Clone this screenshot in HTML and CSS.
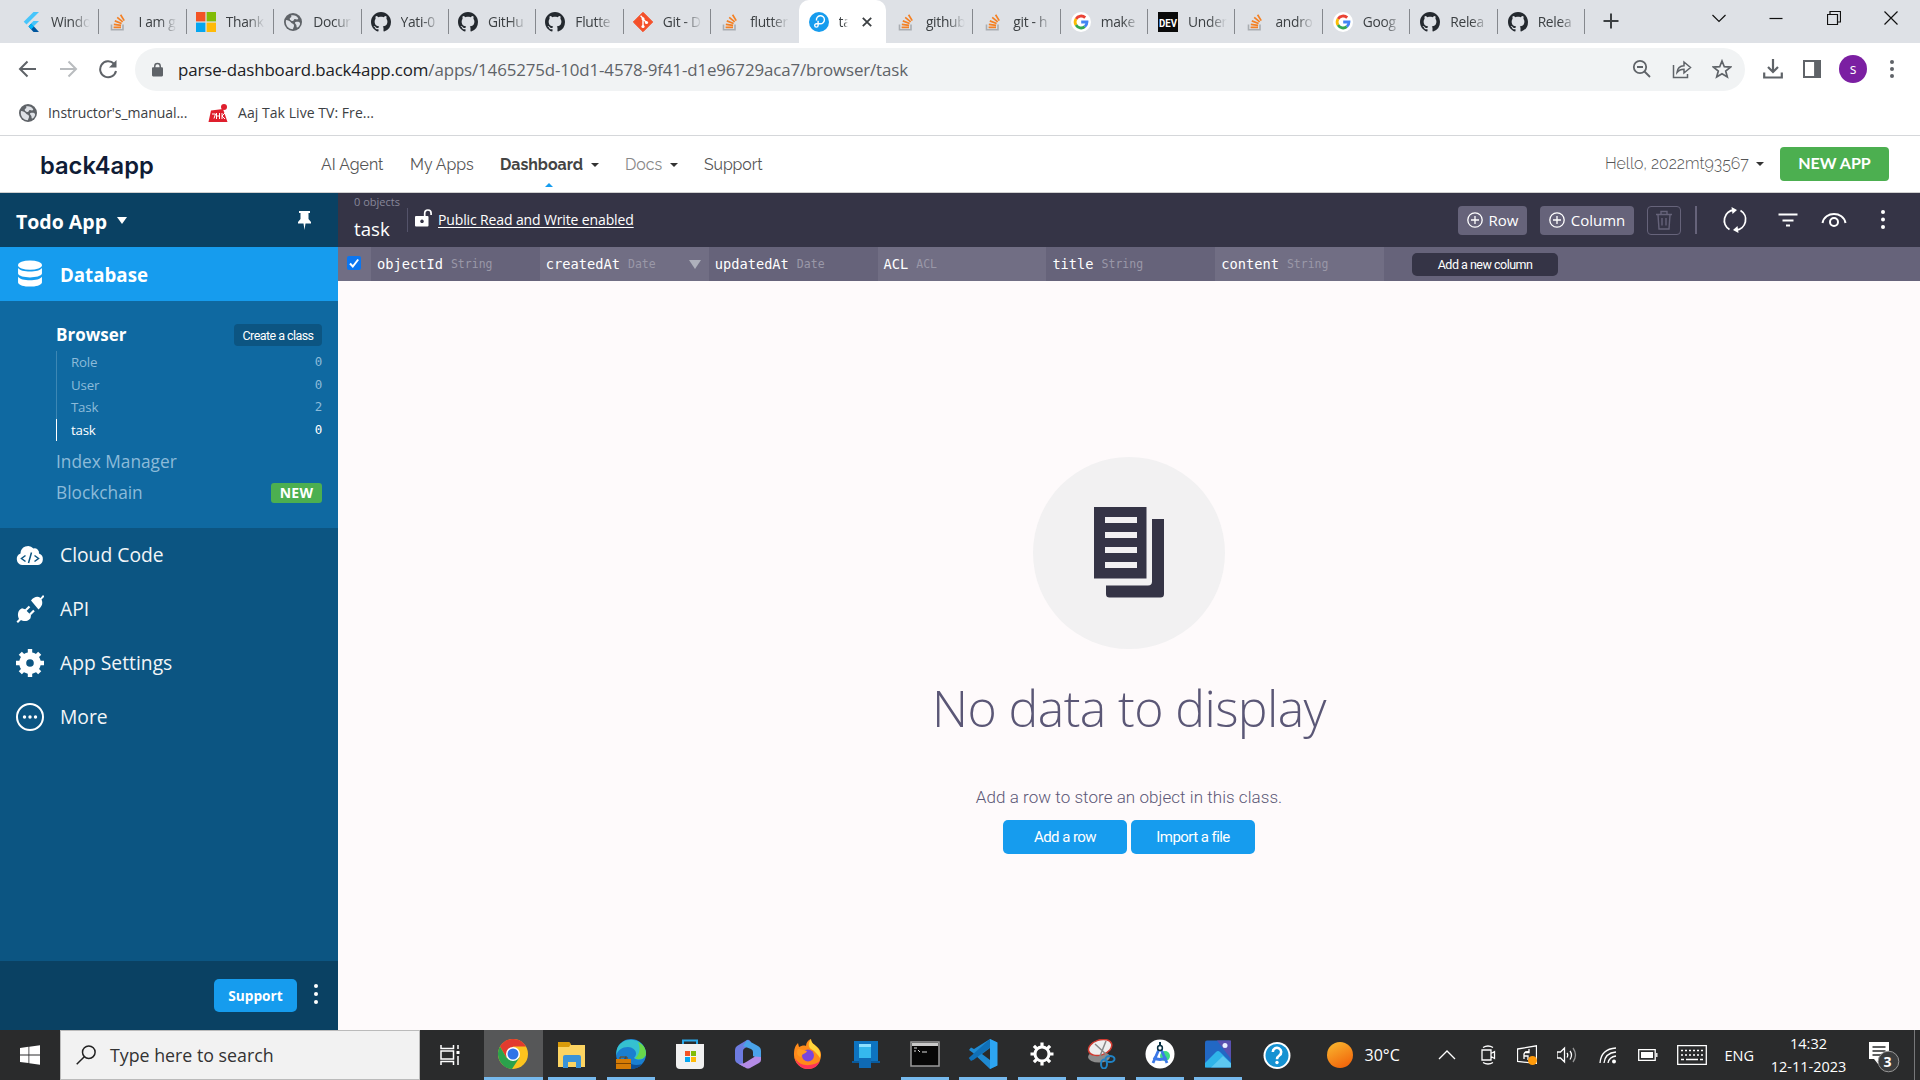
FILE: index.html
```html
<!DOCTYPE html>
<html lang="en">
<head>
<meta charset="utf-8">
<title>task</title>
<link rel="stylesheet" href="styles.css">
</head>
<body>
<svg class="defs" width="0" height="0" aria-hidden="true">
  <symbol id="so" viewBox="0 0 20 20"><path d="M3.5 12.5v5.3h11.5v-5.3" fill="none" stroke="#a9adb2" stroke-width="1.6"/><path d="M5.6 15.3h7.4M5.8 12.3l7.3 1M6.8 8.9l6.8 2.6M9.2 5.4l5.5 4.5M12.6 2.8l3.6 5.8" stroke="#f48024" stroke-width="1.7" fill="none"/></symbol>
  <symbol id="gh" viewBox="0 0 16 16"><path fill="#24292f" d="M8 0C3.58 0 0 3.58 0 8c0 3.54 2.29 6.53 5.47 7.59.4.07.55-.17.55-.38 0-.19-.01-.82-.01-1.49-2.01.37-2.53-.49-2.69-.94-.09-.23-.48-.94-.82-1.13-.28-.15-.68-.52-.01-.53.63-.01 1.08.58 1.23.82.72 1.21 1.87.87 2.33.66.07-.52.28-.87.51-1.07-1.78-.2-3.64-.89-3.64-3.95 0-.87.31-1.59.82-2.15-.08-.2-.36-1.02.08-2.12 0 0 .67-.21 2.2.82.64-.18 1.32-.27 2-.27s1.36.09 2 .27c1.53-1.04 2.2-.82 2.2-.82.44 1.1.16 1.92.08 2.12.51.56.82 1.27.82 2.15 0 3.07-1.87 3.75-3.65 3.95.29.25.54.73.54 1.48 0 1.07-.01 1.93-.01 2.2 0 .21.15.46.55.38A8.01 8.01 0 0 0 16 8c0-4.42-3.58-8-8-8z"/></symbol>
  <symbol id="goog" viewBox="0 0 20 20"><circle cx="10" cy="10" r="10" fill="#fff"/><g fill="none" stroke-width="2.8"><path d="M5 6.9A6 6 0 0 1 14.2 5.6" stroke="#ea4335"/><path d="M5 13.1a6 6 0 0 1 0-6.2" stroke="#fbbc05"/><path d="M13.8 14.7A6 6 0 0 1 5 13.1" stroke="#34a853"/><path d="M10.2 10H16a6 6 0 0 1-2.2 4.7" stroke="#4285f4"/></g></symbol>
  <symbol id="globe" viewBox="0 0 20 20"><circle cx="10" cy="10" r="9" fill="#5f6368"/><path d="M3 8c2 0 4 1 5 2.500s3 1 3 3-1 2-1 3.800C5 17 2 13 3 8zM8 3.500c3-1 6 .5 7 2.500s-2 1.500-3 1-1 2-2.500 2S6 7 7 6s2-1 1-2.500zM12.500 10c2-.5 4-.3 4.500 1s-1 4-2.500 4.500-.5-2-1.500-3-1.500-2.200-.5-2.500z" fill="#dee1e6"/></symbol>
</svg>

<header class="chrome">
  <div class="tabstrip">
    <div class="tab"><svg viewBox="0 0 20 20"><path d="M12.500 0H18L5.500 12.500 2.700 9.800z" fill="#47c5fb"/><path d="M12.500 9H18l-5 5-2.800-2.700z" fill="#47c5fb"/><path d="M7.500 14.400l2.800-2.800 7.700 8.400h-5.500z" fill="#00569e"/><path d="M7.500 14.400l2.800-2.800 2.800 2.800-2.800 2.800z" fill="#00b5f8"/></svg><span>Windo</span></div>
    <div class="tab"><svg><use href="#so"/></svg><span>I am g</span></div>
    <div class="tab"><svg viewBox="0 0 20 20"><path fill="#f35325" d="M0 0h9.400v9.400H0z"/><path fill="#81bc06" d="M10.600 0H20v9.400h-9.400z"/><path fill="#05a6f0" d="M0 10.600h9.400V20H0z"/><path fill="#ffba08" d="M10.600 10.600H20V20h-9.400z"/></svg><span>Thank</span></div>
    <div class="tab"><svg><use href="#globe"/></svg><span>Docur</span></div>
    <div class="tab"><svg><use href="#gh"/></svg><span>Yati-0</span></div>
    <div class="tab"><svg><use href="#gh"/></svg><span>GitHu</span></div>
    <div class="tab"><svg><use href="#gh"/></svg><span>Flutte</span></div>
    <div class="tab"><svg viewBox="0 0 20 20"><path d="M10 .3 19.700 10 10 19.700.3 10z" fill="#f4502a" stroke="#f4502a" stroke-linejoin="round"/><path d="M7.600 3.800 10 6.200v8M10 7l3.500 3.500" stroke="#fff" stroke-width="1.400" fill="none"/><circle cx="10" cy="14.500" r="1.600" fill="#fff"/><circle cx="13.500" cy="10.500" r="1.600" fill="#fff"/><circle cx="10" cy="6.800" r="1.500" fill="#fff"/></svg><span>Git - D</span></div>
    <div class="tab"><svg><use href="#so"/></svg><span>flutter</span></div>
    <div class="tab active"><svg viewBox="0 0 20 20"><circle cx="10" cy="10" r="10" fill="#169cee"/><path d="M7.500 8.500A4 4 0 1 1 11 11.700H7.400a1.700 1.700 0 1 0 1.700 1.700V8.800" stroke="#fff" stroke-width="1.400" fill="none"/></svg><span>ta</span><svg class="x" viewBox="0 0 10 10"><path d="M.8.800l8.400 8.400M9.200.800.800 9.200" stroke="#3c4043" stroke-width="1.800"/></svg></div>
    <div class="tab"><svg><use href="#so"/></svg><span>github</span></div>
    <div class="tab"><svg><use href="#so"/></svg><span>git - h</span></div>
    <div class="tab"><svg><use href="#goog"/></svg><span>make</span></div>
    <div class="tab"><svg viewBox="0 0 20 20"><path d="M0 0h20v20H0z" fill="#0a0a0a"/><text x="1" y="14.500" textLength="18" lengthAdjust="spacingAndGlyphs" class="dev">DEV</text></svg><span>Under</span></div>
    <div class="tab"><svg><use href="#so"/></svg><span>andro</span></div>
    <div class="tab"><svg><use href="#goog"/></svg><span>Goog</span></div>
    <div class="tab"><svg><use href="#gh"/></svg><span>Relea</span></div>
    <div class="tab"><svg><use href="#gh"/></svg><span>Relea</span></div>
    <svg class="plus" viewBox="0 0 16 16"><path d="M8 .5v15M.5 8h15" stroke="#3c4043" stroke-width="2"/></svg>
    <div class="winctl">
      <svg viewBox="0 0 14 14"><path d="M.5 4 7 10.500 13.500 4" /></svg>
      <svg viewBox="0 0 14 14"><path d="M.5 7.500h13"/></svg>
      <svg viewBox="0 0 14 14"><path d="M.5 3.500h10v10H.5zM3 3.500v-3h10.500v10.500h-3"/></svg>
      <svg viewBox="0 0 14 14"><path d="M.5.500l13 13M13.500.500l-13 13"/></svg>
    </div>
  </div>
  <div class="toolbar">
    <div class="navs">
      <svg viewBox="0 0 20 20"><path d="M18 10H2.500M9.500 2.500 2 10l7.500 7.500" stroke="#5f6368" stroke-width="2" fill="none"/></svg>
      <svg viewBox="0 0 20 20"><path d="M2 10h15.500M10.500 2.500 18 10l-7.500 7.500" stroke="#b9bcbf" stroke-width="2" fill="none"/></svg>
      <svg viewBox="0 0 20 20"><path d="M16 4.800A8 8 0 1 0 18 12" stroke="#5f6368" stroke-width="2" fill="none"/><path d="M18.500 1v7.500H11z" fill="#5f6368"/></svg>
    </div>
    <div class="omni">
      <svg class="lock" viewBox="0 0 12 15"><rect y="5" width="12" height="10" rx="1.200" fill="#5f6368"/><path d="M3 6V4a3 3 0 0 1 6 0v2" stroke="#5f6368" stroke-width="1.600" fill="none"/></svg>
      <span class="url"><b>parse-dashboard.back4app.com</b>/apps/1465275d-10d1-4578-9f41-d1e96729aca7/browser/task</span>
      <div class="omni-icons">
        <svg viewBox="0 0 20 20"><circle cx="8" cy="8" r="6.200"/><path d="M12.500 12.500 18 18M5 8h6"/></svg>
        <svg viewBox="0 0 20 20"><path d="M1.500 6v12.500h14V15M5 13.500C5.500 8.500 8.500 7 12 6.800V3l6.500 5.500L12 14v-3.700c-3 0-5 .7-7 3.200z" stroke-width="1.500"/></svg>
        <svg viewBox="0 0 20 20"><path d="M10 2l2.300 5.700 6.200.4-4.800 3.900 1.600 6L10 14.700 4.700 18l1.600-6-4.800-3.900 6.200-.4z" stroke-width="1.700"/></svg>
      </div>
    </div>
    <div class="ext">
      <svg viewBox="0 0 20 20"><path d="M10 0v13M5 8l5 5 5-5M1.200 13.500V18.500h17.600v-5" stroke-width="2.200"/></svg>
      <svg viewBox="0 0 20 20"><path d="M2 2h16v16H2z" stroke-width="2"/><path d="M13 2h5v16h-5z" fill="#5f6368"/></svg>
      <i class="avatar">s</i>
      <svg viewBox="0 0 20 20"><g fill="#5f6368" stroke="none"><circle cx="10" cy="3" r="2"/><circle cx="10" cy="10" r="2"/><circle cx="10" cy="17" r="2"/></g></svg>
    </div>
  </div>
  <div class="bookmarks">
    <svg viewBox="0 0 20 20"><use href="#globe"/></svg><span class="bm1">Instructor's_manual...</span>
    <svg viewBox="0 0 20 20"><path d="M3 7.500l12-1.500 4.500 13H.5z" fill="#df1f2d"/><circle cx="16" cy="4" r="3" fill="#df1f2d"/><path d="M4 11h3.500l-1.500 4.500M8.500 10v6M8.500 13h2.500M11.500 10v6M14 10v6M17 10l-3 3 3 3" stroke="#fff" fill="none" stroke-width="1"/></svg><span class="bm2">Aaj Tak Live TV: Fre...</span>
  </div>
</header>

<nav class="site">
  <strong class="brand">back4app</strong>
  <a class="n1">AI Agent</a><a class="n2">My Apps</a><a class="n3 on">Dashboard</a><i class="caret"></i><a class="n4">Docs</a><i class="caret"></i><a class="n5">Support</a>
  <span class="hello">Hello, 2022mt93567</span><i class="caret"></i>
  <button class="newapp">NEW APP</button>
</nav>

<div class="app">
  <aside class="side">
    <div class="side-head"><b>Todo App</b><i class="tri"></i><svg viewBox="0 0 13 19"><path d="M1 0h11v2h-1.500v6L13 11v1.500H7.500L6.500 19l-1-6.500H0V11l2.500-3V2H1z" fill="#fff"/></svg></div>
    <div class="item db"><svg viewBox="0 0 28 30"><g fill="#fff"><ellipse cx="14" cy="5.500" rx="12.800" ry="5"/><path d="M1.200 8.500c3 5 22.600 5 25.600 0v6c-1 5.500-24.600 5.500-25.600 0zM1.200 18c3 5 22.600 5 25.600 0v6c-1 6-24.600 6-25.600 0z"/></g></svg><b>Database</b></div>
    <div class="sub">
      <div class="row browser"><b>Browser</b><button>Create a class</button></div>
      <ul>
        <li><span>Role</span><em>0</em></li><li><span>User</span><em>0</em></li><li><span>Task</span><em>2</em></li><li class="cur"><span>task</span><em>0</em></li>
      </ul>
      <div class="row light im"><span>Index Manager</span></div>
      <div class="row light"><span>Blockchain</span><i class="new">NEW</i></div>
    </div>
    <div class="item"><svg viewBox="0 0 28 28"><path fill="#fff" d="M6 24a6 6 0 0 1-1.500-11.500A7.500 7.500 0 0 1 17.500 7.500 4.500 4.500 0 0 1 23 12.500 6 6 0 0 1 22 24z"/><path d="M9.500 14.500 5.500 17.500l4 3M18.500 14.500l4 3-4 3M15.500 11.500l-3 10.500" stroke="#0c5582" stroke-width="1.500" fill="none"/></svg><span>Cloud Code</span></div>
    <div class="item"><svg viewBox="0 0 28 28"><g fill="#fff"><path d="M15 5.500c3-4 7-4.500 9.500-2.500L27 0l1.500 1.500L25.500 4.500c1.500 3 1 6.500-3 10z"/><path d="M4 14.500l2-1.300 3 1 4 4 2 2-.5 3c-2.500 3.500-7 3.500-9.500 1.800L2 28 .5 26.500 3 24c-1.500-3-1.500-7 1-9.500z"/><path d="M9.500 15.500l4-4M14 19.500l4-4" stroke="#fff" stroke-width="2.200"/></g></svg><span>API</span></div>
    <div class="item"><svg viewBox="0 0 28 28"><circle cx="14" cy="14" r="7.300" fill="none" stroke="#fff" stroke-width="7"/><path d="M14 0v5M14 23v5M0 14h5M23 14h5M4.300 4.300l3.500 3.500M20.200 20.200l3.500 3.500M4.300 23.700l3.500-3.500M20.200 7.800l3.500-3.500" stroke="#fff" stroke-width="4.400"/></svg><span>App Settings</span></div>
    <div class="item"><svg viewBox="0 0 28 28"><circle cx="14" cy="14" r="13" fill="none" stroke="#fff" stroke-width="2"/><g fill="#fff"><circle cx="8.500" cy="14" r="1.700"/><circle cx="14" cy="14" r="1.700"/><circle cx="19.500" cy="14" r="1.700"/></g></svg><span>More</span></div>
    <div class="side-foot"><button>Support</button><svg viewBox="0 0 4 20"><g fill="#fff"><circle cx="2" cy="2" r="2"/><circle cx="2" cy="10" r="2"/><circle cx="2" cy="18" r="2"/></g></svg></div>
  </aside>

  <main>
    <div class="bar">
      <div class="title"><small>0 objects</small><b>task</b></div>
      <i class="div1"></i>
      <svg class="unlock" viewBox="0 0 17 18"><path fill="#fff" fill-rule="evenodd" d="M1 7h11.500a1 1 0 0 1 1 1v8.500a1 1 0 0 1-1 1H1a1 1 0 0 1-1-1V8a1 1 0 0 1 1-1zm6 3.500a1.800 1.800 0 1 0 .01 0z"/><path d="M9.700 7.500V4.200a3.200 3.200 0 0 1 6.400 0V6" stroke="#fff" stroke-width="1.700" fill="none"/></svg>
      <u>Public Read and Write enabled</u>
      <button class="brow"><svg viewBox="0 0 16 16"><circle cx="8" cy="8" r="7.200"/><path d="M8 4v8M4 8h8"/></svg>Row</button>
      <button class="bcol"><svg viewBox="0 0 16 16"><circle cx="8" cy="8" r="7.200"/><path d="M8 4v8M4 8h8"/></svg>Column</button>
      <span class="trash"><svg viewBox="0 0 18 20"><path d="M1 4.500h16M3 5l1 14h10l1-14M6 4V1.500h6V4M7 8v7.500M11 8v7.500" stroke="#66637a" stroke-width="1.400" fill="none"/></svg></span>
      <i class="div2"></i>
      <div class="acts">
        <svg viewBox="0 0 26 26"><path d="M7.500 22.500A10.500 10.500 0 0 1 12 3M18.500 3.500A10.500 10.500 0 0 1 14 23" stroke-width="1.800"/><path d="M9.500 0 15 3l-4.500 4zM16.500 26 11 23l4.500-4z" fill="#fff" stroke="none"/></svg>
        <svg viewBox="0 0 26 26"><path d="M3.500 7.500h19M7.500 13.500h11M11 18.500h4" stroke-width="1.900"/></svg>
        <svg viewBox="0 0 26 26"><path d="M1.500 16c2-12 21-12 23 0" stroke-width="2"/><circle cx="13" cy="15" r="4" stroke-width="2"/></svg>
        <svg viewBox="0 0 26 26"><g fill="#fff" stroke="none"><circle cx="13" cy="5" r="2"/><circle cx="13" cy="12.500" r="2"/><circle cx="13" cy="20" r="2"/></g></svg>
      </div>
    </div>
    <div class="cols">
      <div class="ck"><i><svg viewBox="0 0 14 14"><path d="M3 7.500l2.800 3L11.200 3.500" stroke="#fff" stroke-width="2" fill="none"/></svg></i></div>
      <div class="c">objectId<span>String</span></div>
      <div class="c alt">createdAt<span>Date</span><i class="sort"></i></div>
      <div class="c">updatedAt<span>Date</span></div>
      <div class="c alt">ACL<span>ACL</span></div>
      <div class="c">title<span>String</span></div>
      <div class="c alt">content<span>String</span></div>
      <button>Add a new column</button>
    </div>
    <section class="empty">
      <div class="disc"><svg viewBox="0 0 70 91"><path fill="#353446" fill-rule="evenodd" d="M0 0h52.500v71.500H0zM11 10v6h32v-6zM11 25v6h32v-6zM11 40v6h32v-6zM11 55v6h32v-6z"/><path fill="#353446" d="M58 12h12v75q0 3.500-3.500 3.500h-51Q12 90.500 12 87v-8.500h42q4 0 4-4z"/></svg></div>
      <h1>No data to display</h1>
      <p>Add a row to store an object in this class.</p>
      <div class="btns"><button>Add a row</button><button>Import a file</button></div>
    </section>
  </main>
</div>

<footer class="task">
  <div class="start"><svg viewBox="0 0 20 20"><path fill="#fff" d="M0 3l8.500-1.200v7.700H0zM9.300 1.700 20 .2v9.300H9.300zM0 10.400h8.500v7.700L0 17zM9.300 10.400H20v9.300L9.300 18.200z"/></svg></div>
  <div class="search"><svg viewBox="0 0 20 20"><circle cx="12.800" cy="7.200" r="6.300"/><path d="M8.300 11.800.7 19.300"/></svg><span>Type here to search</span></div>
  <div class="apps">
    <div class="tv"><svg viewBox="0 0 20 20"><path d="M1 0v3.500h12.500V0M1 20v-3.500h12.500V20M1 6h12.500v8H1zM18 0v4M18 11v9" stroke="#fff" stroke-width="1.500" fill="none"/><path d="M16.500 6h3v3h-3z" fill="#fff"/></svg></div>
    <div class="a sel"><svg viewBox="0 0 30 30"><circle cx="15" cy="15" r="15" fill="#fcc31e"/><path d="M2 7.500A15 15 0 0 1 28 7.500H15L8.500 18.700z" fill="#e23b2e"/><path d="M2 7.500A15 15 0 0 0 14 30l7.500-11.500L8.500 18.700z" fill="#2ba24c"/><circle cx="15" cy="15" r="7" fill="#fff"/><circle cx="15" cy="15" r="5.500" fill="#2f74e8"/></svg></div>
    <div class="a run"><svg viewBox="0 0 30 30"><path d="M1 3h11l2 3h14v22H1z" fill="#fcd462"/><path d="M1 3h11l2 2-2 3H1z" fill="#d99b0b"/><path d="M6 29V18q0-2 2-2h14q2 0 2 2v11h-5v-6h-8v6z" fill="#3a93d8"/></svg></div>
    <div class="a run"><svg viewBox="0 0 30 30"><circle cx="15" cy="15" r="15" fill="#1b7fd0"/><path d="M1 10C5-3 28-3 30 14c0 7-8 8-12 5 5-5 0-11-6-11C6 8 2 11 0 16z" fill="#35c1d0"/><path d="M22 3c6 3 8 7 8 12-1 5-7 6-11 4.500C25 14 24 8 22 3z" fill="#68d84b"/><path d="M10 17c0 7 7 11 16 8-3 4-8 5-11 5-8-1-9-10-5-13z" fill="#0d4f96"/><path d="M0 20h15v10H0z" fill="#d57b05"/><path d="M4 20v-2h7v2M0 24.500h15" stroke="#7b4300" fill="none"/></svg></div>
    <div class="a"><svg viewBox="0 0 30 30"><path d="M8 5V1.500h14V5" stroke="#2aa7e8" stroke-width="2" fill="none"/><path d="M1 5h28v21q0 4-4 4H5q-4 0-4-4z" fill="#f1f1f1"/><path fill="#f35325" d="M10 12h5v5h-5z"/><path fill="#81bc06" d="M16 12h5v5h-5z"/><path fill="#05a6f0" d="M10 18h5v5h-5z"/><path fill="#ffba08" d="M16 18h5v5h-5z"/></svg></div>
    <div class="a"><svg viewBox="0 0 30 30"><path d="M14 1 4 7Q2 8.500 2 11v9q0 3 3 4.500l6 3.500-1-4V12q0-2 2-3l6-3V3q-2-3-4-2z" fill="#6d7be0"/><path d="M14 1l11 6q3 1.500 3 5v9l-8-4v-4q0-2-2-3l-8-3z" fill="#4aa3ea"/><path d="M28 18v3q0 2-2 3l-9 5q-2 1-4 0l-8-4.500q5 1 9-2l8-5z" fill="#b48be6"/></svg></div>
    <div class="a"><svg viewBox="0 0 30 30"><path d="M2 16C2 10 3 7 6 4l1 4c2-1 5-2 7-1 0-3 2-6 5-7 0 4 3 5 6 8 3 2 4 5 4 8 0 8-6 14-13 14S2 24 2 16z" fill="#ff8a1a"/><path d="M19 0c0 4 3 5 6 8 3 3 4 7 3 11-2-3-5-7-9-9-3-2-3-6 0-10z" fill="#ffd53b"/><path d="M3 19c1 6 6 11 13 11 6 0 10-3 12-8-6 5-20 7-25-3z" fill="#ff3558"/><circle cx="16" cy="16.500" r="6" fill="#7a46dd"/><path d="M6 10c4 0 5 1 9 2-1 3-5 2-6 6-4-1-5-4-3-8z" fill="#ff9b22"/></svg></div>
    <div class="a"><svg viewBox="0 0 30 30"><path d="M3 2h24v20H3z" fill="#0d73c0"/><path d="M1 22h28v2H1z" fill="#0a5a9c"/><path d="M8 5h12v24H8z" fill="#35b8ee"/><path d="M8 19h12v10H8z" fill="#0f6ab4"/><path d="M8 5h12v3H8z" fill="#8de0ff"/></svg></div>
    <div class="a run"><svg viewBox="0 0 30 30"><path d="M1 3h28v24H1z" fill="#070707" stroke="#9a9a9a" stroke-width="1.500"/><path d="M2 4h26v3H2z" fill="#c9c9c9"/><path d="M4 9h3M4 12h2M8 11l2 2M12 13h5" stroke="#ddd"/></svg></div>
    <div class="a run"><svg viewBox="0 0 30 30"><path d="M22 0l7 3.500v23L22 30 4.500 13.500 1 11l2-2.500 3 1.500z" fill="#1f8ad2"/><path d="M22 8.500 6 20.500 3 22l-2.300-3L22 0z" fill="#1070b8"/><path d="M22 0l7.500 3.500v23L22 30z" fill="#2da5f2"/><path d="M22 9v12l-8-6z" fill="#2a2b2b"/></svg></div>
    <div class="a run"><svg viewBox="0 0 30 30"><circle cx="15" cy="15" r="7" fill="none" stroke="#fff" stroke-width="3"/><path d="M15 3.500v4M15 22.500v4M3.500 15h4M22.500 15h4M6.900 6.900l2.800 2.800M20.300 20.300l2.800 2.800M6.900 23.100l2.800-2.800M20.300 9.700l2.800-2.800" stroke="#fff" stroke-width="3.200"/></svg></div>
    <div class="a run"><svg viewBox="0 0 30 30"><ellipse cx="13" cy="18" rx="11" ry="5.500" fill="#8c8c8c"/><ellipse cx="14" cy="8.500" rx="12" ry="7.500" fill="#eee" stroke="#cf3b31" stroke-width="1.500" transform="rotate(-18 14 8)"/><path d="M20 2 14 17M9 5l13 12" stroke="#888" stroke-width="1.500"/><ellipse cx="24" cy="20" rx="4.500" ry="3" fill="none" stroke="#2083c5" stroke-width="2"/><ellipse cx="18" cy="25" rx="3" ry="4.500" fill="none" stroke="#2083c5" stroke-width="2"/></svg></div>
    <div class="a run"><svg viewBox="0 0 30 30"><circle cx="15" cy="15" r="14.500" fill="#fff"/><circle cx="20" cy="17" r="5" fill="#3ddc84"/><path d="M15 8 8 24M15 8l7 16M8.500 18.500q6.500 4 13 0" stroke="#3b78e7" stroke-width="2.800" fill="none"/><circle cx="15" cy="9" r="2.400" fill="#fff" stroke="#073042" stroke-width="1.500"/><path d="M15 3v4" stroke="#073042" stroke-width="2"/></svg></div>
    <div class="a run"><svg viewBox="0 0 30 30"><rect x="2" y="1.500" width="26" height="27" rx="2" fill="#2268c4"/><path d="M14 1.500h14V20z" fill="#5a50b0"/><path d="M2 24l11-11q2-2 4 0l11 11v4.500H2z" fill="#2fb4e9"/><path d="M8 28.500 20 17l8 7.500v4z" fill="#8cdcf7" opacity=".5"/><circle cx="22" cy="6.500" r="2.500" fill="#e9efff"/></svg></div>
    <div class="a"><svg viewBox="0 0 30 30"><circle cx="15" cy="16.500" r="13.500" fill="#fff"/><circle cx="15" cy="16.500" r="11.500" fill="#1592d2"/><path d="M10.800 13a4.200 4.200 0 1 1 6.500 3.500c-1.800 1.200-2.300 1.700-2.300 3.700" stroke="#fff" stroke-width="2.600" fill="none"/><circle cx="15" cy="23.500" r="1.700" fill="#fff"/></svg></div>
  </div>
  <div class="tray">
    <svg class="sun" viewBox="0 0 26 26"><defs><linearGradient id="sg" x1="0" y1="0" x2=".5" y2="1"><stop offset="0" stop-color="#f9bb31"/><stop offset="1" stop-color="#f26a0d"/></linearGradient></defs><circle cx="13" cy="13" r="13" fill="url(#sg)"/></svg>
    <span class="deg">30°C</span>
    <svg class="t1" viewBox="0 0 20 20"><path d="M2 14l8-8 8 8"/></svg>
    <svg class="t2" viewBox="0 0 20 20"><path d="M4 5h9v10H4zM13 8.500l3.500-2v7l-3.500-2M5 2.500q5-3 10 0M5 17.500q5 3 10 0"/></svg>
    <svg class="t3" viewBox="0 0 20 20"><path d="M.5 4 19.500.8v17.500L.5 16.500zM7 14v-5q1-3 5-2M12 4v3.500H9M7 11h4v4"/><circle cx="15.500" cy="15.500" r="4.500" fill="#ff9a0a" stroke="none"/></svg>
    <svg class="t4" viewBox="0 0 20 20"><path d="M0 7h3.500l4-4v14l-4-4H0zM10 8q1.500 2 0 4.500M13 6q3 4 0 8.500"/><path d="M16 3q5 7 0 14" opacity=".5"/></svg>
    <svg class="t5" viewBox="0 0 20 20"><path d="M2 18Q3 4 18 3M6 18Q7 8 18 7M10 18q1-6 8-7" /><circle cx="16" cy="16.500" r="2" fill="#fff" stroke="none"/></svg>
    <svg class="t6" viewBox="0 0 20 20"><path d="M.7 4.700h16.500v10.600H.7zM18.800 8v4"/><path d="M3 7h12v6H3z" fill="#fff" stroke="none"/></svg>
    <svg class="t7" viewBox="0 0 30 20"><path d="M.7.700h28.600v18.600H.7z"/><path d="M4 5.500h22M4 10h22" stroke-dasharray="2 2"/><path d="M4 14.500h3M9 14.500h12M23 14.500h3"/></svg>
    <span class="eng">ENG</span>
    <div class="clock"><span>14:32</span><span class="date">12-11-2023</span></div>
    <div class="notif"><svg viewBox="0 0 32 32"><path d="M0 1h20v17H10l-1 5-4-5H0z" fill="#fff"/><path d="M3.500 6h13M3.500 10h13M3.500 14h9" stroke="#2a2b2c" stroke-width="1.300"/><circle cx="19.500" cy="20.500" r="10.300" fill="#3b3c3d" stroke="#999" stroke-width="1"/></svg><b>3</b></div>
    <i class="peek"></i>
  </div>
</footer>
</body>
</html>
```
FILE: styles.css
```css
* { box-sizing: border-box; }
body { margin: 0; width: 1920px; height: 1080px; overflow: hidden; display: flex; flex-direction: column; font-family: "Open Sans", "Noto Sans", sans-serif; background: #fff; }
.defs { display: block; position: absolute; }
button { border: 0; padding: 0; font-family: inherit; color: #fff; white-space: nowrap; }
svg { flex: none; }
i, em { font-style: normal; }
span, a, b, u { white-space: nowrap; }

/* Browser frame */
.chrome { height: 136px; border-bottom: 1px solid #d5d7da; flex: none; }
.tabstrip { height: 43px; background: #dee1e6; display: flex; padding-left: 12px; align-items: flex-start; }
.tab { width: 87.400px; height: 43px; display: flex; align-items: center; padding-left: 9px; position: relative; flex: none; }
.tab:nth-child(n+10) { padding-left: 10px; }
.tab svg { width: 20px; height: 20px; margin-right: 10px; }
.tab span { width: 39px; overflow: hidden; font-size: 13.800px; letter-spacing: -.3px; color: #3c4043; -webkit-mask-image: linear-gradient(90deg, #000 55%, transparent); mask-image: linear-gradient(90deg, #000 55%, transparent); }
.tab::after { content: ""; position: absolute; right: 0; top: 9px; width: 1px; height: 25px; background: #85888d; }
.tab.active { background: #fff; border-radius: 10px 10px 0 0; }
.tab.active::after, .tab:nth-child(9)::after { display: none; }
.tab.active span { width: 9px; }
.tab.active .x { width: 10px; height: 10px; margin: 0 0 0 14px; }
.dev { font: 700 11px "Roboto", sans-serif; fill: #fff; }
.plus { width: 16px; height: 16px; margin: 13px 0 0 18px; }
.winctl { margin-left: auto; display: flex; gap: 43.500px; padding: 11px 22px 0 0; }
.winctl svg { width: 14px; height: 14px; fill: none; stroke: #111; stroke-width: 1.200; }
.toolbar { height: 52px; display: flex; align-items: center; }
.navs { width: 135px; display: flex; gap: 20px; padding-left: 17.500px; }
.navs svg { width: 20px; height: 20px; }
.omni { width: 1610px; height: 43px; border-radius: 22px; background: #f1f3f4; display: flex; align-items: center; padding: 0 13px 0 17px; }
.lock { width: 11px; height: 15px; margin-right: 15px; }
.url { font-size: 16.900px; color: #5f6368; letter-spacing: -.13px; width: 740px; }
.url b { color: #202124; font-weight: 400; }
.omni-icons { display: flex; gap: 20px; margin-left: auto; }
.omni-icons svg, .ext svg { width: 20px; height: 20px; fill: none; stroke: #5f6368; stroke-width: 1.800; }
.ext { display: flex; align-items: center; margin-left: 18px; }
.ext svg + svg { margin-left: 19px; }
.avatar { width: 28px; height: 28px; border-radius: 50%; background: #7b1fa2; color: #fff; font: 14px/27px "Open Sans", sans-serif; text-align: center; margin: 0 15px 0 17px; }
.bookmarks { height: 36px; display: flex; align-items: center; padding-left: 18px; font-size: 14px; color: #3c4043; }
.bookmarks svg { width: 20px; height: 20px; margin-right: 10px; }
.bookmarks span { margin-top: -2px; }
.bm1 { width: 160px; letter-spacing: -.05px; }
.bm2 { letter-spacing: .05px; }

/* Site navigation */
.site { height: 57px; flex: none; border-bottom: 1px solid #d0d0d0; display: flex; align-items: center; font: 15.900px "Raleway", "Lato", sans-serif; color: #555; padding-top: 2px; }
.brand { font: 600 23.700px "Inter", sans-serif; color: #0f1c36; margin-left: 40px; width: 281px; }
.site a { height: 20px; line-height: 20px; }
.n1 { width: 89px; }
.n2 { width: 90px; }
.n3 { width: 91px; font-weight: 700; color: #444; position: relative; }
.n3::after { content: ""; position: absolute; left: 45px; top: 28px; border: 4px solid transparent; border-top: 0; border-bottom-color: #169cee; }
.n4 { width: 45px; margin-left: 26px; color: #888; }
.n5 { margin-left: 26px; letter-spacing: -.1px; }
.caret { border: 4px solid transparent; border-top-color: #333; border-bottom: 0; width: 7px; }
.hello { margin: -3px 8px 0 auto; width: 143px; font-weight: 300; }
.hello + .caret { margin-top: -2px; }
.newapp { width: 109px; height: 34px; background: #4caf50; border-radius: 4px; margin: -2px 31px 0 16px; font: 700 16px/32px "Lato", sans-serif; padding-bottom: 2px; }

.app { height: 837px; flex: none; display: flex; }

/* Sidebar */
.side { width: 338px; background: #0c5582; color: #fff; display: flex; flex-direction: column; }
.side-head { height: 54px; background: #0a4163; display: flex; align-items: center; padding: 0 27px 0 16px; font-size: 19.500px; }
.side-head b { width: 101px; padding-top: 3px; }
.tri { border: 5px solid transparent; border-top: 7px solid #fff; border-bottom: 0; }
.side-head svg { width: 13px; height: 19px; margin-left: auto; }
.item { height: 54px; display: flex; align-items: center; padding-left: 16px; font-size: 19.300px; }
.item svg { width: 28px; height: 28px; margin-right: 16px; }
.item span { margin-top: -2px; }
.db b { font-size: 18.700px; }
.item:not(.db) { color: #f3f6f8; }
.db { background: #169cee; }
.sub { height: 227px; background: #0f69a1; padding: 23px 16px 0 56px; color: #8cbbd9; }
.row { display: flex; align-items: center; justify-content: space-between; height: 31px; }
.browser { height: 22px; font-size: 17px; color: #fff; }
.browser b { margin-top: -2px; }
.browser button { width: 88px; height: 22px; border-radius: 4px; background: #0c5582; font: 12.500px "Roboto", sans-serif; letter-spacing: -.55px; }
.sub ul { list-style: none; margin: 5px 0 5px; padding: 0; }
.sub li { height: 22.500px; display: flex; justify-content: space-between; align-items: center; border-left: 1px solid #3d87b4; padding-left: 14px; font-size: 13.300px; letter-spacing: -.2px; }
.sub li em { font: 12.500px "DejaVu Sans Mono", monospace; margin-top: -1px; }
.sub li.cur { color: #fff; border-color: #fff; }
.light { font-size: 17.300px; }
.light span { margin-top: -1px; }
.new { width: 51px; height: 20px; border-radius: 3px; background: #4caf50; color: #fff; font-weight: 700; font-size: 14px; line-height: 20px; letter-spacing: .3px; text-align: center; }
.side-foot { height: 69px; margin-top: auto; background: #0a4163; display: flex; align-items: center; justify-content: flex-end; padding-right: 20px; }
.side-foot button { width: 83px; height: 33px; background: #169cee; border-radius: 5px; font-weight: 700; font-size: 13.700px; }
.side-foot svg { width: 4px; height: 20px; margin: -3px 0 0 17px; }

/* Data browser */
main { flex: 1; display: flex; flex-direction: column; background: #fefafb; }
.bar { height: 54px; background: #353446; color: #fff; display: flex; align-items: center; padding-left: 16px; }
.title { width: 53px; display: flex; flex-direction: column; }
.title small { font-size: 11px; line-height: 14px; color: #88879a; white-space: nowrap; }
.title b { font-size: 18.700px; line-height: 32px; font-weight: 400; margin-top: 4px; }
.div1 { width: 1px; height: 24px; background: #54536a; }
.unlock { width: 17px; height: 18px; margin: -4px 6px 0 7px; }
.bar u { font-size: 14px; letter-spacing: -.13px; text-underline-offset: 2px; margin-top: -1px; }
.bar button { height: 29px; background: #66637a; border-radius: 4px; display: flex; align-items: center; justify-content: center; gap: 6px; font-size: 15px; }
.bar button svg { width: 16px; height: 16px; fill: none; stroke: #fff; stroke-width: 1.300; }
.brow { width: 69px; margin-left: auto; }
.bcol { width: 94px; margin-left: 13px; }
.trash { width: 34px; height: 29px; margin-left: 13px; border: 1px solid #66637a; border-radius: 4px; display: flex; align-items: center; justify-content: center; }
.trash svg { width: 18px; height: 20px; }
.div2 { width: 2px; height: 28px; background: #66637a; margin: 0 25px 0 14px; }
.acts { display: flex; margin-right: 24px; }
.acts svg { width: 26px; height: 26px; fill: none; stroke: #fff; }
.acts svg:nth-child(2) { margin: 0 20px 0 27px; }
.acts svg:nth-child(4) { margin-left: 23px; }
.cols { height: 34px; display: flex; align-items: center; background: #66637a; font: 600 14px "DejaVu Sans Mono", monospace; color: #fff; }
.ck { width: 33px; height: 34px; background: #716e84; padding: 9px 0 0 9px; }
.ck i { display: block; width: 14px; height: 14px; border-radius: 2px; background: #0b76f0; }
.ck svg { display: block; }
.c { width: 168.850px; height: 34px; display: flex; align-items: center; padding: 0 8px 0 6px; font-weight: 400; font-size: 13.700px; }
.c.alt { background: #716e84; }
.c span { font-size: 11.500px; color: #9a98a8; margin-left: 8px; }
.sort { margin-left: auto; border: 6px solid transparent; border-top: 9px solid #aeb0bb; border-bottom: 0; }
.cols button { width: 146px; height: 23px; border-radius: 5px; background: #353446; margin-left: 28px; font: 12.500px "Roboto", sans-serif; letter-spacing: -.5px; }
.empty { flex: 1; display: flex; flex-direction: column; align-items: center; padding: 176px 0 0; }
.disc { width: 192px; height: 192px; border-radius: 50%; background: #f2f1f2; display: flex; padding: 50px 0 0 61px; }
.disc svg { width: 70px; height: 91px; }
.empty h1 { margin: 21px 0 0; font-size: 50px; line-height: 76px; font-weight: 300; color: #5b5776; white-space: nowrap; letter-spacing: -.6px; }
.empty p { margin: 41px 0 13px; font: 300 17px/20px "Roboto", sans-serif; letter-spacing: .05px; color: #5b5776; }
.btns { display: flex; gap: 4px; }
.btns button { width: 124px; height: 34px; background: #169cee; border-radius: 5px; font: 400 15px "Roboto", sans-serif; letter-spacing: -.55px; }

/* Windows taskbar */
.task { height: 50px; background: #2a2b2c; display: flex; flex: none; color: #fff; }
.start { width: 60px; display: flex; align-items: center; justify-content: center; }
.start svg { width: 20px; height: 20px; }
.search { width: 360px; height: 50px; background: #f2f2f2; border: 1px solid #bbb; display: flex; align-items: center; color: #333; padding-left: 15px; font-size: 17.800px; }
.search svg { width: 20px; height: 20px; margin-right: 14px; fill: none; stroke: #222; stroke-width: 1.500; }
.apps { display: flex; }
.tv { width: 64px; display: flex; align-items: center; padding-left: 20px; }
.tv svg { width: 20px; height: 20px; }
.a { width: 58.750px; display: flex; align-items: center; justify-content: center; border-bottom: 3px solid transparent; }
.a svg { width: 30px; height: 30px; }
.a.run { background: linear-gradient(#76b9ed, #76b9ed) center bottom / 48px 3px no-repeat border-box; }
.a.sel { background: #565758; border-bottom-color: #76b9ed; }
.tray { flex: 1; display: flex; align-items: center; font-size: 16px; }
.tray > svg { width: 20px; height: 20px; fill: none; stroke: #fff; stroke-width: 1.300; }
.tray .sun { width: 26px; height: 26px; stroke: none; margin-left: 20px; }
.deg { width: 72px; margin-left: 12px; }
.t2 { margin-left: 21px; }
.t3 { margin-left: 19px; }
.t4 { margin-left: 20px; }
.t5 { margin-left: 21px; }
.t6 { margin-left: 20px; }
.tray .t7 { width: 30px; margin-left: 19px; }
.eng { width: 31px; margin-left: 18px; font-size: 14.500px; }
.clock { width: 84px; margin-left: 11px; display: flex; flex-direction: column; align-items: center; font-size: 14.500px; line-height: 23px; }
.notif { margin: 4px 0 0 18px; width: 32px; height: 32px; position: relative; }
.notif svg { width: 32px; height: 32px; }
.notif b { position: absolute; left: 15px; top: 11px; font-size: 14px; line-height: 20px; }
.peek { width: 1px; height: 50px; background: #77787a; margin-left: auto; margin-right: 5px; }
```
